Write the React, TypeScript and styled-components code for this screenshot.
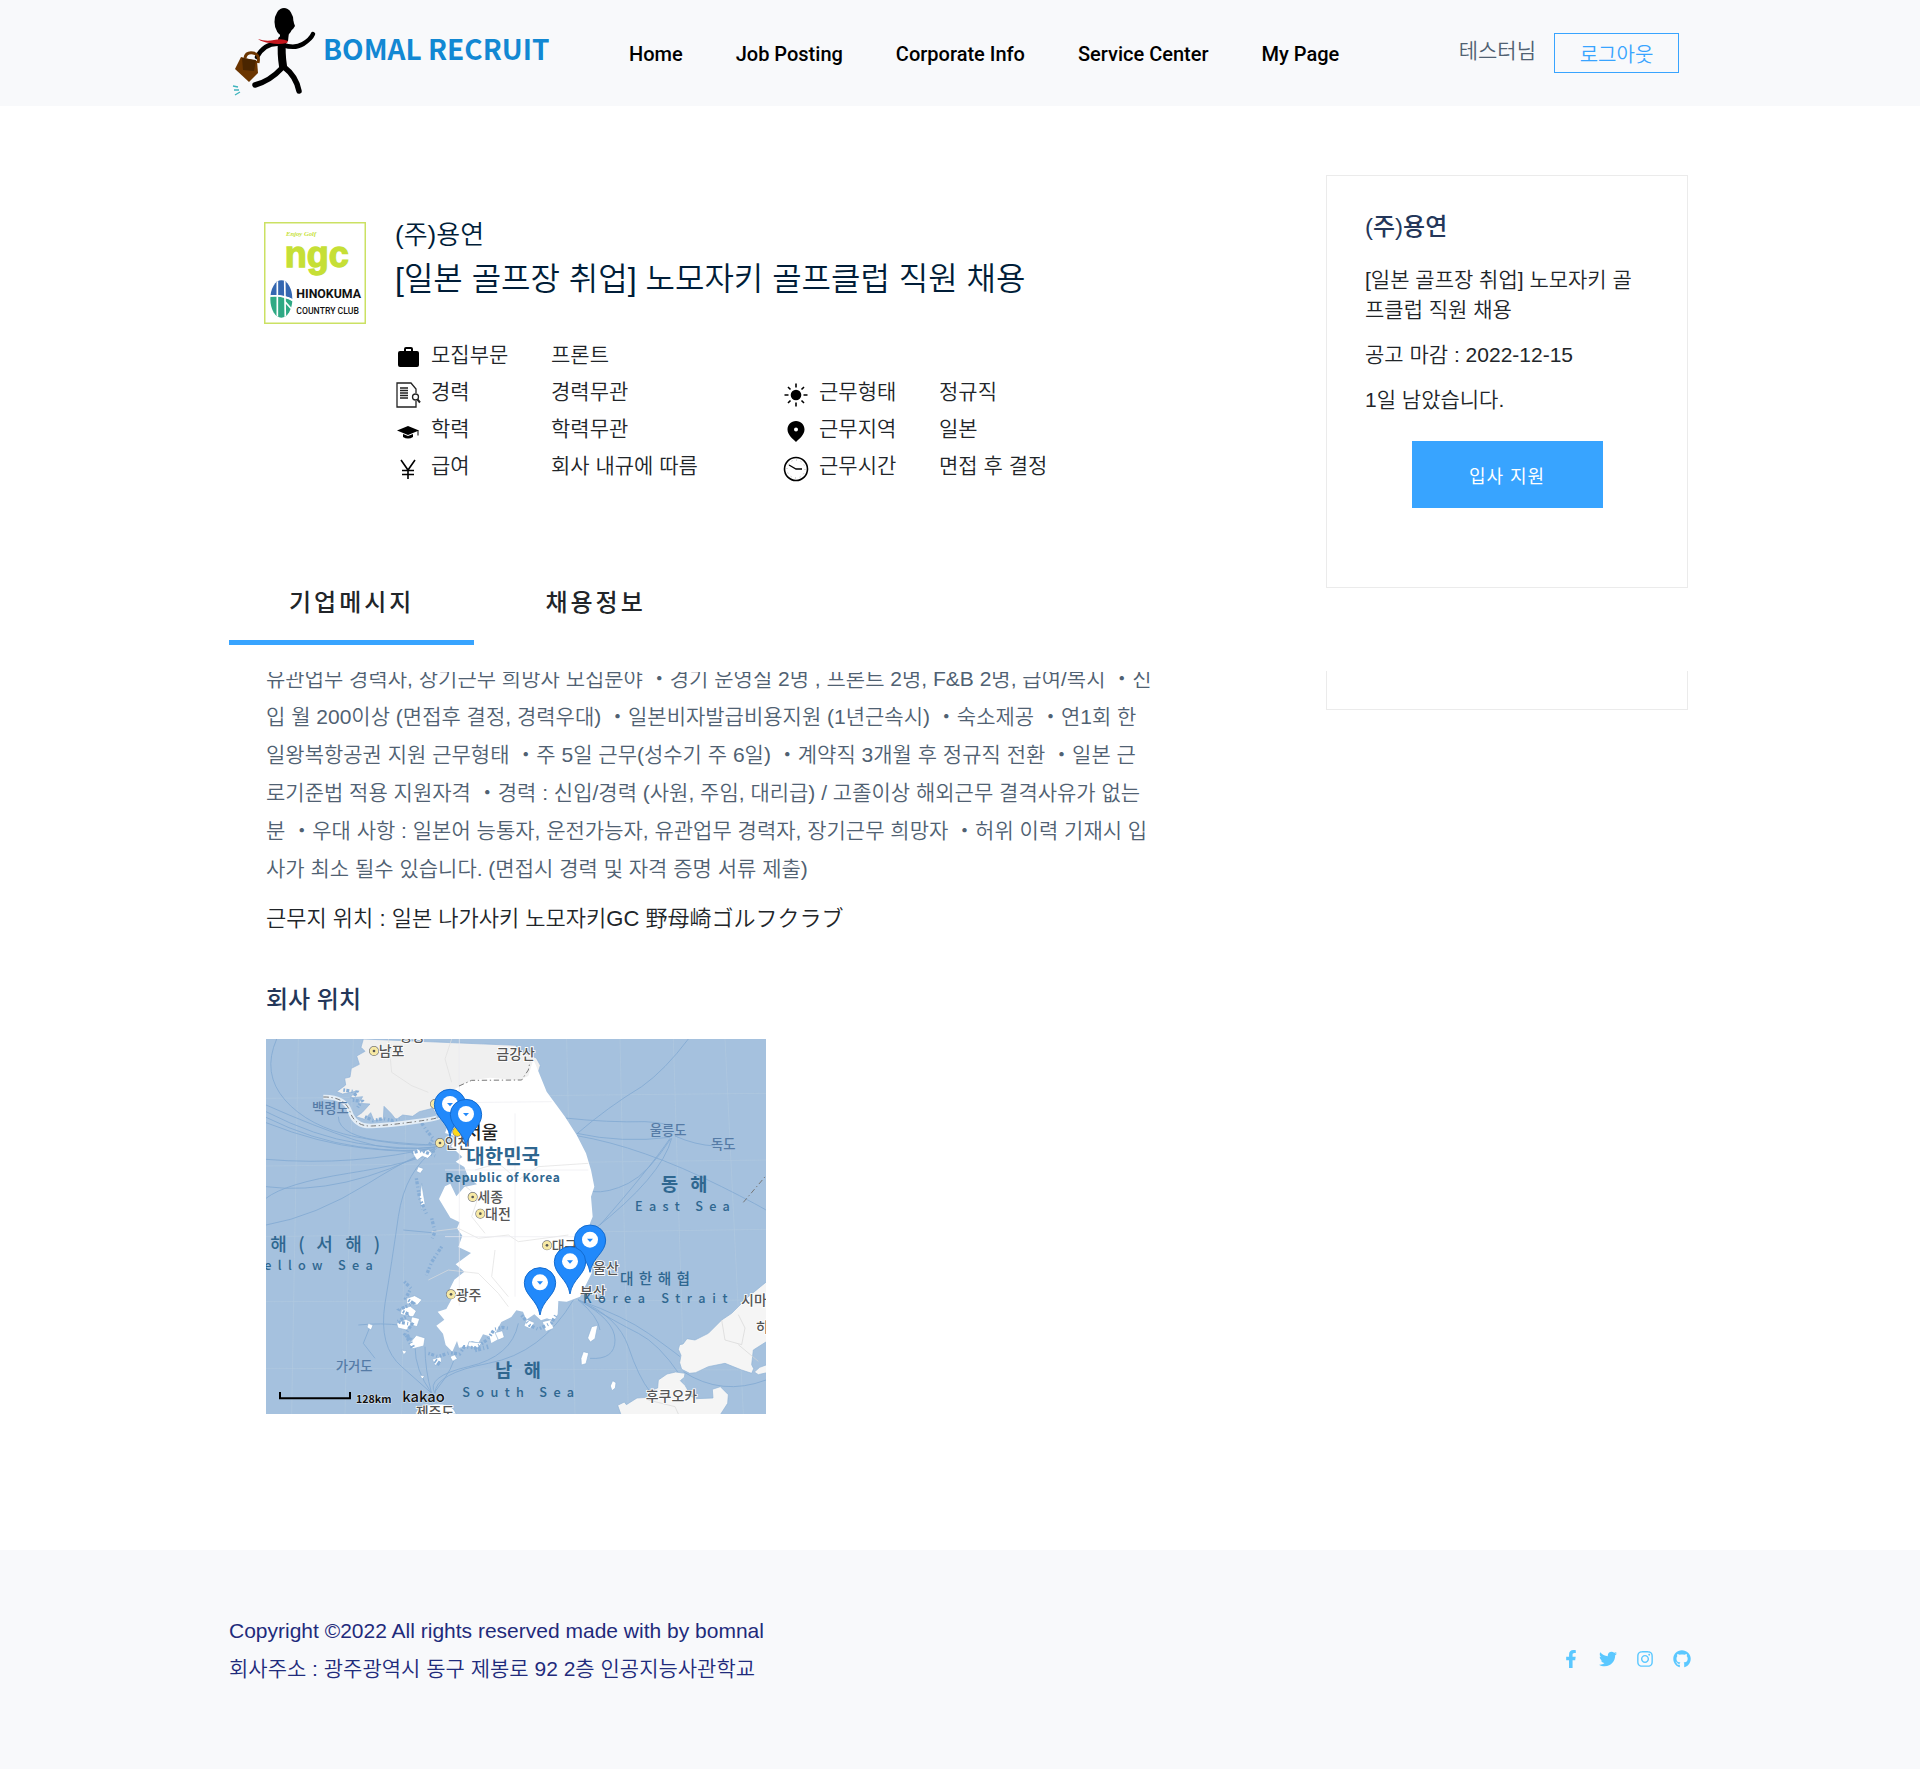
import React from "react";
import styled, { createGlobalStyle } from "styled-components";
import { FaFacebookF, FaTwitter, FaInstagram, FaGithub } from "react-icons/fa";

const GlobalStyle = createGlobalStyle`
  *, *::before, *::after { box-sizing: border-box; }
  body {
    margin: 0;
    background: #fff;
    color: #212529;
    font-family: "Liberation Sans", "Noto Sans CJK KR", sans-serif;
    font-size: 21px;
    font-weight: 350;
    line-height: 38px;
  }
  h1, h2, h3, p, dl, dt, dd, ul { margin: 0; padding: 0; }
  ul { list-style: none; }
  a { color: inherit; text-decoration: none; }
  button { font-family: inherit; cursor: pointer; }
`;

const Container = styled.div`
  width: 100%;
  max-width: 1510px;
  margin: 0 auto;
  padding: 0 24px;
`;

const Header = styled.header`
  background: #f8f9fb;
`;

const HeaderRow = styled(Container)`
  display: flex;
  align-items: center;
  min-height: 106px;
`;

const Brand = styled.a`
  display: flex;
  align-items: center;
  flex: 0 0 400px;
  gap: 4px;
  color: #1288d3;
`;

const BrandName = styled.span`
  padding-bottom: 10px;
  font-family: "Noto Sans CJK KR", sans-serif;
  font-size: 28px;
  font-weight: 700;
  line-height: 38px;
  white-space: nowrap;
`;

const Nav = styled.nav`
  display: flex;
  gap: 53px;
  padding-top: 2px;
  color: #000;
  font-family: Roboto, sans-serif;
  font-size: 20px;
  font-weight: 500;
  white-space: nowrap;
`;

const Account = styled.div`
  display: flex;
  align-items: center;
  gap: 18px;
  margin-left: auto;
  padding-right: 12px;
  color: #506172;
  white-space: nowrap;
`;

const UserName = styled.span`
  padding-bottom: 4px;
`;

const LogoutButton = styled.button`
  width: 125px;
  height: 40px;
  padding: 0;
  border: 1px solid #38a4ff;
  background: transparent;
  color: #38a4ff;
  font-size: 20px;
  font-weight: 350;
`;

const Main = styled(Container).attrs({ as: "main" })`
  display: grid;
  grid-template-columns: minmax(0, 1fr) 362px;
  column-gap: 120px;
  padding: 69px 27px 136px 24px;
`;

const Hero = styled.section`
  display: flex;
  gap: 29px;
  padding: 39px 0 0 35px;
`;

const CompanyLogo = styled.svg`
  flex: none;
  width: 102px;
  height: 102px;
  margin-top: 8px;
`;

const HeroBody = styled.div`
  flex: 1;
  min-width: 0;
`;

const Company = styled.p`
  color: #001d38;
  font-size: 26px;
  line-height: 42px;
`;

const JobTitle = styled.h1`
  color: #001d38;
  font-size: 32px;
  font-weight: 350;
  line-height: 46px;
`;

const Facts = styled.dl`
  display: grid;
  grid-template-columns: 388px 1fr;
  margin-top: 34px;
  line-height: 37px;
`;

const Fact = styled.div<{ $wide?: boolean }>`
  display: grid;
  grid-template-columns: 26px 110px 1fr;
  column-gap: 10px;
  align-items: center;
  grid-column: ${(p) => (p.$wide ? "1 / -1" : "auto")};
`;

const FactIcon = styled.svg`
  width: 26px;
  height: 26px;
  margin-top: 6px;
`;

const Tabs = styled.div`
  display: flex;
  gap: 11px;
  margin-top: 82px;
`;

const Tab = styled.button<{ $active?: boolean }>`
  padding: 19px 60px;
  border: 0;
  border-bottom: 5px solid ${(p) => (p.$active ? "#38a4ff" : "transparent")};
  background: none;
  color: #212529;
  font-size: 24px;
  font-weight: 500;
  letter-spacing: 3px;
  line-height: 36px;
`;

const Details = styled.section`
  margin-top: 27px;
  padding-left: 37px;
`;

const MessageWindow = styled.div`
  overflow: hidden;
`;

const Message = styled.p`
  margin-top: -12px;
  color: #506172;
`;

const Workplace = styled.p`
  margin-top: 12px;
  font-size: 22px;
`;

const MapHeading = styled.h3`
  margin-top: 44px;
  color: #24375a;
  font-size: 24px;
  font-weight: 500;
  line-height: 36px;
`;

const MapView = styled.svg`
  display: block;
  width: 500px;
  max-width: 100%;
  height: auto;
  margin-top: 21px;
  background: #a5c1de;
`;

const Card = styled.section`
  padding: 33px 38px 79px;
  border: 1px solid #ebebeb;
`;

const CardTitle = styled.h2`
  color: #24375a;
  font-size: 24px;
  font-weight: 500;
  line-height: 36px;
`;

const CardText = styled.p<{ $lead?: boolean }>`
  margin-top: ${(p) => (p.$lead ? 20 : 15)}px;
  padding-right: 8px;
  line-height: 30px;
`;

const ApplyButton = styled.button`
  display: block;
  width: 191px;
  height: 67px;
  margin: 26px auto 0;
  padding: 0;
  border: 0;
  background: #38a4ff;
  color: #fff;
  font-size: 18px;
  font-weight: 400;
  letter-spacing: 1px;
`;

const CardTail = styled.div`
  height: 39px;
  margin-top: 83px;
  border: 1px solid #ebebeb;
  border-top: 0;
`;

const Footer = styled.footer`
  background: #f8f9fb;
  color: #1f2b7b;
`;

const FooterRow = styled(Container)`
  display: flex;
  align-items: center;
  justify-content: space-between;
  padding-top: 62px;
  padding-bottom: 81px;
`;

const Social = styled.ul`
  display: flex;
  align-items: center;
  gap: 19px;
  padding-top: 18px;
  color: #5bc8ff;

  a { display: flex; }
`;

const RunnerArt = () => (
  <svg width="90" height="94" viewBox="-2 8 90 94" aria-hidden="true">
    <g fill="none" stroke="#000" strokeLinecap="round" strokeLinejoin="round">
      <path d="M51 42Q50 56 52 68" strokeWidth="8" />
      <path d="M50 46Q34 44 26 59" strokeWidth="4.5" />
      <path d="M52 47Q64 51 72 46T82 36" strokeWidth="4.5" />
      <path d="M51 70Q39 83 24 87" strokeWidth="5.500" />
      <path d="M53 69Q65 78 68 93" strokeWidth="5.500" />
    </g>
    <ellipse cx="53" cy="24" rx="9.500" ry="14" />
    <path d="M61 20l3 8-2 3-4 3z" />
    <path d="M49 34h9l-1 9h-8z" />
    <path d="M27 41q8 3 16 1t14 1l-1 2q-9 2-17 0-8-1-12-4z" fill="#c4161c" />
    <path d="M10 59l16 4 1 12-9 9L4 71z" fill="#6b3500" />
    <path d="M11 60l14 2-2 11-11-1z" fill="#4a2500" />
    <path d="M14 60q1-6 8-5 7 1 5 10" fill="none" stroke="#6b3500" strokeWidth="3" />
    <path d="M2 88l5 1M3 92l5 0M4 97l5-3" stroke="#3fb4bd" strokeWidth="1.3" />
  </svg>
);

const GolfLogo = () => (
  <CompanyLogo viewBox="0 0 306 306" role="img" aria-label="ngc Hinokuma Country Club">
    <rect x="2" y="2" width="302" height="302" fill="#fff" stroke="#cbe163" strokeWidth="5" />
    <text x="66" y="41" fill="#c6df36" fontFamily="Liberation Serif, serif" fontSize="20" fontStyle="italic" fontWeight="700">Enjoy Golf</text>
    <text x="62" y="136" fill="#c6df36" stroke="#c6df36" strokeWidth="4" fontFamily="Liberation Sans, sans-serif" fontSize="108" fontWeight="700">ngc</text>
    <clipPath id="ball"><ellipse cx="52" cy="231" rx="33" ry="56" /></clipPath>
    <g clipPath="url(#ball)">
      <path d="M18 170h70v62q-30-16-70-12z" fill="#3467b1" />
      <path d="M18 224q40-4 70 14v60H18z" fill="#2fa984" />
      <path d="M40 170v120M62 170l2 122M18 222q40-4 70 14M64 240l26 30-20 20" fill="none" stroke="#fff" strokeWidth="5" />
    </g>
    <g fill="#111" fontFamily="Roboto, sans-serif">
      <text x="97" y="228" fontSize="37" fontWeight="700">HINOKUMA</text>
      <text x="97" y="275" fontSize="26" fontWeight="500">COUNTRY CLUB</text>
    </g>
  </CompanyLogo>
);

type IconName = "case" | "career" | "school" | "yen" | "sun" | "pin" | "clock";

const iconArt: Record<IconName, React.ReactNode> = {
  case: (
    <path d="M4 6h5V4q0-2 2-2h5q2 0 2 2v2h4q2 0 2 2v12q0 2-2 2H5q-2 0-2-2V8q0-2 2-2zm7 0h5V4h-5z" fillRule="evenodd" />
  ),
  career: (
    <g fill="none" stroke="#222" strokeWidth="1.3">
      <path d="M21 11V7l-5-6H2v24h19v-6M5 6h8M5 8.500h8M5 11h8M5 13.500h8M5 16h8" />
      <circle cx="20.500" cy="15" r="3" />
      <path d="M22.500 17.500l2.500 3" strokeWidth="2" />
    </g>
  ),
  school: (
    <g>
      <path d="M2 11.500L13 7l11 4.500L13 16z" />
      <path d="M8 15l5 2 5-2v3q-5 3-10 0z" />
      <path d="M23 11.500v5" stroke="#000" />
    </g>
  ),
  yen: <path d="M6 4l7 10 7-10M13 14v9M7 14.500h12M7 18.500h12" fill="none" stroke="#000" strokeWidth="1.6" />,
  sun: (
    <g>
      <circle cx="13" cy="13" r="5.300" />
      <path d="M13 1.500v4M13 20.500v4M1.500 13h4M20.500 13h4M5 5l2.500 2.500M18.500 18.500L21 21M5 21l2.500-2.500M18.500 7.500L21 5" stroke="#000" strokeWidth="1.600" />
    </g>
  ),
  pin: (
    <path d="M13 2c5 0 8.500 4 8.500 8.500C21.500 16 16 20 13 23 10 20 4.500 16 4.500 10.500 4.500 6 8 2 13 2zm0 6.500a2 2 0 1 0 0 4A2 2 0 0 0 13 8.500z" fillRule="evenodd" />
  ),
  clock: (
    <g fill="none" stroke="#000">
      <circle cx="13" cy="13" r="11.500" strokeWidth="1.6" />
      <circle cx="13" cy="13" r="9" stroke="#999" strokeDasharray="0.800 3.900" />
      <path d="M6 9l7 4h6" strokeWidth="1.3" />
    </g>
  ),
};

const facts: { icon: IconName; label: string; value: string; wide?: boolean }[] = [
  { icon: "case", label: "모집부문", value: "프론트", wide: true },
  { icon: "career", label: "경력", value: "경력무관" },
  { icon: "sun", label: "근무형태", value: "정규직" },
  { icon: "school", label: "학력", value: "학력무관" },
  { icon: "pin", label: "근무지역", value: "일본" },
  { icon: "yen", label: "급여", value: "회사 내규에 따름" },
  { icon: "clock", label: "근무시간", value: "면접 후 결정" },
];

const messageLines = [
  "유관업무 경력자, 장기근무 희망자 모집분야 ・경기 운영실 2명 , 프론트 2명, F&B 2명, 급여/복지 ・신",
  "입 월 200이상 (면접후 결정, 경력우대) ・일본비자발급비용지원 (1년근속시) ・숙소제공 ・연1회 한",
  "일왕복항공권 지원 근무형태 ・주 5일 근무(성수기 주 6일) ・계약직 3개월 후 정규직 전환 ・일본 근",
  "로기준법 적용 지원자격 ・경력 : 신입/경력 (사원, 주임, 대리급) / 고졸이상 해외근무 결격사유가 없는",
  "분 ・우대 사항 : 일본어 능통자, 운전가능자, 유관업무 경력자, 장기근무 희망자 ・허위 이력 기재시 입",
  "사가 최소 될수 있습니다. (면접시 경력 및 자격 증명 서류 제출)",
];

const cities = [
  { x: 357, y: 243, name: "남포" },
  { x: 555, y: 519, name: "인천" },
  { x: 653, y: 681, name: "세종" },
  { x: 676, y: 731, name: "대전" },
  { x: 588, y: 973, name: "광주" },
  { x: 876, y: 826, name: "대구" },
];

const routes = [
  "M65 207Q20 310 90 390T300 500T540 525",
  "M33 405Q180 470 300 510T545 530",
  "M33 425Q180 500 310 520T540 532",
  "M33 442Q170 510 310 530T540 536",
  "M33 458Q190 520 330 535T540 540",
  "M33 568Q300 590 545 530",
  "M33 650Q260 680 540 535",
  "M33 685Q90 640 280 610T540 545",
  "M33 765Q180 740 340 640T540 545",
  "M250 440Q250 500 400 515T545 520",
  "M545 535Q450 600 430 740T390 1000Q370 1130 440 1190L530 1270",
  "M480 1130Q480 1200 530 1270",
  "M510 1130Q510 1200 530 1270",
  "M600 1150Q600 1190 540 1265",
  "M790 1060Q770 1160 640 1190T540 1270",
  "M955 990Q860 1150 700 1180T540 1270",
  "M310 1065Q380 1058 440 1066",
  "M445 780L530 788",
  "M345 1070L325 1120 360 1165",
  "M1300 207Q1230 300 1160 350Q1060 410 965 492",
  "M930 444Q1060 458 1170 455Q1230 458 1250 470",
  "M965 490Q1100 520 1245 502",
  "M965 497Q1160 530 1400 650T1533 740",
  "M1245 505Q1180 600 1035 765",
  "M1250 505Q1220 620 1015 780",
  "M1248 505Q1180 610 1120 640T1012 665",
  "M1260 498Q1320 525 1380 528",
  "M970 990Q1110 1040 1180 1090T1275 1160",
  "M970 990Q1090 1060 1150 1090T1275 1215",
  "M970 990Q1090 1040 1120 1130T1185 1265",
  "M970 990Q1080 1050 1080 1110T1005 1165",
  "M970 990Q1030 1040 1035 1080",
  "M1285 1205Q1400 1280 1533 1230",
];

const pins = [
  [585, 500],
  [633, 530],
  [1005, 907],
  [945, 972],
  [855, 1035],
];

const KoreaMap = () => (
  <MapView viewBox="33 207 1500 1125" role="img" aria-label="회사 위치 지도">
    <rect x="33" y="207" width="1500" height="1125" fill="#a5c1de" />
    <g fill="none" stroke="#b1c8e0" strokeWidth="2">
      <path d="M33 385L1533 370M33 588L1533 570M33 800L1533 778M33 995L1533 990M33 1195L1533 1200" />
      <path d="M130 207L110 1332M295 207L270 1332M455 207L440 1332M935 207L960 1332M1095 207L1120 1332M1255 207L1290 1332M1410 207L1465 1332" />
    </g>
    <g fill="none" stroke="#82aad3" strokeWidth="2.5">
      {routes.map((d) => <path key={d} d={d} />)}
    </g>
    <path
      d="M325 207l-7 25 12 12-25 14 8 25-24 12-4 26-16 4 3 20-27 20 18 7 38-8-16 20 38-4-12 20 34 2-24 26-18 12 26 8 18-20 10 24 28-5 2-38 22 22 14 18 20-14 30 4 20-14 40-10 10 17 75-70 30-15 55-10 60 6 55 2 25-15 13-44-12-22-30-12-24-12-8-14z"
      fill="#f0f0f0"
      stroke="#8fb2d8"
      strokeWidth="2"
    />
    <path
      d="M545 428l28-40 25-30 22-12 30-15 55-8 85 8 30-13 13-43 6 2 36 88 55 75 35 55 28 55 15 50 10 50-10 30 5 60-8 20 5 150-35 70-40 15-25-2-2 40-12 20-20-8-18 6-20-18-24 16-10-24-20-4-15 20-30 15-15 28 12 20-27 15-5-20-20-6-14 26-20-6-8 16-30 4-6-20-14 32-20-20-8-34-20-24 24-18-20-24 26-8 18-34-14-14 20-40 30-24-26-22 46-34-38-18 12-34-16-22 8-18-28-14-34-56 18-38 16-8 18 38 24-28 38-8-26-20-12-32-26-16 20-14-34-32 20-28-38-12 6-16 30 0z"
      fill="#fff"
    />
    <g fill="#fff" stroke="#8fb2d5" strokeWidth="2">
      <path d="M470 545l18-8 14 8 18-6 12 12-14 14-16-6-16 12zM462 1122l22-26 26 8-4 24-32 8zM455 985l24-8 22 12-14 16-32-4zM440 1015l26-6 18 14-10 18-38-8zM425 1060l28-12 20 10-18 22-26-6zM470 1040l24 6-8 24-20-6zM532 1168l26-8 2 20-20 6zM585 1160l14-6 8 12-14 8zM642 1115l38 4-12 16-30-6zM720 1088l22-6 6 20-18 8zM815 1048l24 10-14 18-18-8zM862 1055l26-6 8 26-24 10zM1010 1070l18-4 -8 40-14 10-8-12zM985 1145l16 4 -8 32-14 4-1-20zM1073 1232l10 6-2 16-10 8-5-14zM340 1060l14 6-6 14-12-8zM490 590l16 6-10 14-12-6zM500 640l10 60-10 20-6-40zM440 1140l16 4-10 10zM495 1215l14 4-8 8z" />
      <path d="M480 1332q8-26 60-30t64 30z" />
    </g>
    <g fill="none" stroke="#86add6" strokeWidth="10" strokeDasharray="5 4 9 7 3 8">
      <path d="M265 360l40 6-15 24 30 4-12 18M330 440l24 12 30-6 30 6 20-6M495 452l20 30 20 24-14 22M470 548l30-6 40 16M484 625l10 60 20 46M530 745l10 40-8 20M560 830l-30 46-16 40" />
      <path d="M448 935l20 20-16 30 22 14-40 20 30 16-38 20 44 8-20 30 26 20M520 1150l30 10 34-12 30 4 14-22 34 4 36-26 20-30 24-6 24 4M800 1036l24 30 26 12 40-20 14-26" />
      <path d="M455 1095l20 40M540 1172l20 14M660 1140l40-10" strokeWidth="14" />
    </g>
    <g fill="#f5f5f5" stroke="#8fb2d5" strokeWidth="2">
      <path d="M1536 934l-56 46-50 50-30 20-40 40-40 20-24-4-12 16-10 2-4 14 8 18-4 22 6 20 24 12 18-2 38-18 50-10 50 20 30 10 6-14-6-12 5-44 41-26z" />
      <path d="M1210 1230l26-18 26-6 28 4-2 12-12 10 14 14 20 34 14 6 50-2-2-26 24-8 24 24-2 26-22 34H1098l-10-28 20-10 6 8 32-20 34-2 10-22 18-6z" />
      <path d="M1536 1184l-22 8-16 14 12 8 26-6z" />
    </g>
    <g fill="none" stroke="#dedede" strokeWidth="2">
      <path d="M400 207l10 100 60 40 50 20M590 207l-20 60 20 70M520 930l60-30 90 10 60 60 30 40M530 785l80-10 60 30 90-10 30 20 150-20M620 640l50 40-20 60 40 50M660 600l70-20 60 50 60-40 150-10M720 840l-10 80 50 60" />
      <path d="M613 207v800M780 430v550M600 398l290-3M570 600h430M570 800h430" stroke="#ececf0" />
      <path d="M1400 1050l10 60 50 14 10-50-20-40M1450 1124l60 50M1180 1290l80 20 10 22" stroke="#d5d5d5" />
    </g>
    <path d="M205 381Q270 380 285 425T350 468T480 455T550 440" fill="none" stroke="#e4edf5" strokeWidth="14" />
    <g fill="none" stroke="#777" strokeWidth="3" strokeDasharray="16 8 4 8">
      <path d="M205 381Q270 380 285 425T350 468T480 455T550 440" />
      <path d="M612 348L650 331 800 330 820 300 826 270M1465 697L1533 617" />
    </g>
    <g fill="#555" fontFamily="Noto Sans CJK KR, sans-serif" fontSize="42" fontWeight="500" stroke="#fff" strokeWidth="5" paintOrder="stroke">
      <text x="432" y="212">평양</text>
      <text x="724" y="266">금강산</text>
      {cities.map((c) => (
        <React.Fragment key={c.name}>
          <circle cx={c.x} cy={c.y} r="13" fill="#f7e9a4" stroke="#777" strokeWidth="4" />
          <circle cx={c.x} cy={c.y} r="4" fill="#555" stroke="none" />
          <text x={c.x + 14} y={c.y + 16}>{c.name}</text>
        </React.Fragment>
      ))}
      <circle cx="540" cy="402" r="13" fill="#f7e9a4" stroke="#777" strokeWidth="4" />
      <circle cx="607" cy="485" r="13" fill="#ffd81a" stroke="#777" strokeWidth="4" />
      <text x="630" y="507" fill="#222" fontSize="54">서울</text>
      <text x="1014" y="910">울산</text>
      <text x="975" y="980">부산</text>
      <text x="1458" y="1004">시마네</text>
      <text x="1502" y="1086">히로시마</text>
      <text x="1172" y="1294">후쿠오카</text>
      <text x="482" y="1341">제주도</text>
    </g>
    <g fill="#557ba6" fontFamily="Noto Sans CJK KR, sans-serif" fontSize="40" fontWeight="500">
      <text x="171" y="430">백령도</text>
      <text x="242" y="1202">가거도</text>
      <text x="1184" y="495">울릉도</text>
      <text x="1368" y="538">독도</text>
    </g>
    <g fill="#2f6790" fontFamily="Noto Sans CJK KR, sans-serif" fontSize="38" fontWeight="500">
      <text x="634" y="583" fontSize="60" fontWeight="700">대한민국</text>
      <text x="571" y="635" fontSize="36" fontWeight="700" letterSpacing="2">Republic of Korea</text>
      <text x="46" y="842" fontSize="54">해</text>
      <text x="130" y="842" fontSize="54">(</text>
      <text x="184" y="842" fontSize="54">서</text>
      <text x="271" y="842" fontSize="54">해</text>
      <text x="356" y="842" fontSize="54">)</text>
      <text x="28" y="900" letterSpacing="19">ellow Sea</text>
      <text x="1218" y="664" fontSize="56" fontWeight="700">동</text>
      <text x="1306" y="664" fontSize="56" fontWeight="700">해</text>
      <text x="1140" y="722" letterSpacing="19">East Sea</text>
      <text x="1095" y="943" fontSize="44" letterSpacing="16">대한해협</text>
      <text x="984" y="998" letterSpacing="20">Korea Strait</text>
      <text x="720" y="1220" fontSize="56" fontWeight="700">남</text>
      <text x="806" y="1220" fontSize="56" fontWeight="700">해</text>
      <text x="622" y="1280" letterSpacing="19">South Sea</text>
    </g>
    {pins.map(([x, y]) => (
      <g key={x} transform={`translate(${x} ${y})`}>
        <path d="M0 0C-7-46-47-58-47-97A47 45 0 0 1 47-97C47-58 7-46 0 0z" fill="#2189fb" stroke="#126bd0" strokeWidth="3" />
        <circle cy="-98" r="24" fill="#fff" />
        <path d="M-9-101H9L0-91z" fill="#2189fb" />
      </g>
    ))}
    <path d="M75 1266v19h210v-19" fill="none" stroke="#000" strokeWidth="6" />
    <g fill="#111" fontFamily="Noto Sans CJK KR, sans-serif" stroke="#dfe9f3" strokeWidth="3" paintOrder="stroke">
      <text x="303" y="1298" fontSize="32" fontWeight="700">128km</text>
      <text x="442" y="1295" fontSize="44" fontWeight="500">kakao</text>
    </g>
  </MapView>
);

const navItems = ["Home", "Job Posting", "Corporate Info", "Service Center", "My Page"];

const socialItems = [
  { name: "Facebook", Icon: FaFacebookF },
  { name: "Twitter", Icon: FaTwitter },
  { name: "Instagram", Icon: FaInstagram },
  { name: "GitHub", Icon: FaGithub },
];

export default function App() {
  return (
    <>
      <GlobalStyle />
      <Header>
        <HeaderRow>
          <Brand href="#">
            <RunnerArt />
            <BrandName>BOMAL RECRUIT</BrandName>
          </Brand>
          <Nav>
            {navItems.map((item) => <a key={item} href="#">{item}</a>)}
          </Nav>
          <Account>
            <UserName>테스터님</UserName>
            <LogoutButton type="button">로그아웃</LogoutButton>
          </Account>
        </HeaderRow>
      </Header>

      <Main>
        <div>
          <Hero>
            <GolfLogo />
            <HeroBody>
              <Company>(주)용연</Company>
              <JobTitle>[일본 골프장 취업] 노모자키 골프클럽 직원 채용</JobTitle>
              <Facts>
                {facts.map((f) => (
                  <Fact key={f.label} $wide={f.wide}>
                    <FactIcon viewBox="0 0 26 26" aria-hidden="true">{iconArt[f.icon]}</FactIcon>
                    <dt>{f.label}</dt>
                    <dd>{f.value}</dd>
                  </Fact>
                ))}
              </Facts>
            </HeroBody>
          </Hero>

          <Tabs role="tablist">
            <Tab type="button" role="tab" aria-selected="true" $active>기업메시지</Tab>
            <Tab type="button" role="tab" aria-selected="false">채용정보</Tab>
          </Tabs>

          <Details>
            <MessageWindow>
              <Message>
                {messageLines.map((line) => (
                  <React.Fragment key={line}>
                    {line}
                    <br />
                  </React.Fragment>
                ))}
              </Message>
            </MessageWindow>
            <Workplace>근무지 위치 : 일본 나가사키 노모자키GC 野母崎ゴルフクラブ</Workplace>
            <MapHeading>회사 위치</MapHeading>
            <KoreaMap />
          </Details>
        </div>

        <aside>
          <Card>
            <CardTitle>(주)용연</CardTitle>
            <CardText $lead>[일본 골프장 취업] 노모자키 골프클럽 직원 채용</CardText>
            <CardText>공고 마감 : 2022-12-15</CardText>
            <CardText>1일 남았습니다.</CardText>
            <ApplyButton type="button">입사 지원</ApplyButton>
          </Card>
          <CardTail />
        </aside>
      </Main>

      <Footer>
        <FooterRow>
          <div>
            <p>Copyright ©2022 All rights reserved made with by bomnal</p>
            <p>회사주소 : 광주광역시 동구 제봉로 92 2층 인공지능사관학교</p>
          </div>
          <Social>
            {socialItems.map(({ name, Icon }) => (
              <li key={name}>
                <a href="#" aria-label={name}><Icon size={18} /></a>
              </li>
            ))}
          </Social>
        </FooterRow>
      </Footer>
    </>
  );
}
